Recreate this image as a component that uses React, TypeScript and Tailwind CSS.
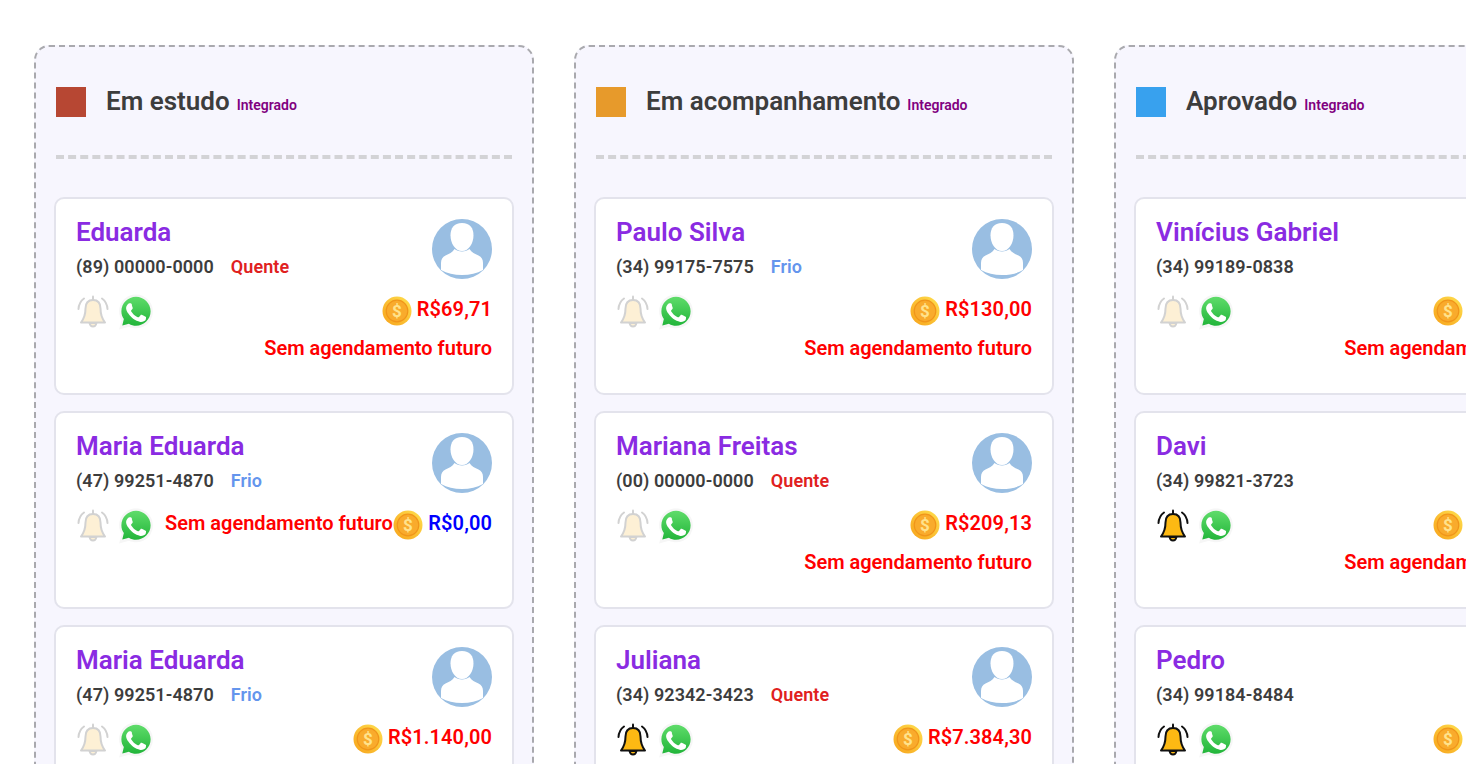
const FONT = "font-['Roboto',sans-serif]";

// ─── Types ────────────────────────────────────────────────────────────────────

interface Lead {
  name: string;
  phone: string;
  temp?: "Quente" | "Frio";
  value: string;
  bellOn?: boolean;
  inlineSchedule?: boolean;
}

interface Column {
  title: string;
  color: string;
  leads: Lead[];
}

const COLUMNS: Column[] = [
  {
    title: "Em estudo",
    color: "bg-[#b74733]",
    leads: [
      { name: "Eduarda", phone: "(89) 00000-0000", temp: "Quente", value: "R$69,71" },
      { name: "Maria Eduarda", phone: "(47) 99251-4870", temp: "Frio", value: "R$0,00", inlineSchedule: true },
      { name: "Maria Eduarda", phone: "(47) 99251-4870", temp: "Frio", value: "R$1.140,00" },
    ],
  },
  {
    title: "Em acompanhamento",
    color: "bg-[#e79a2b]",
    leads: [
      { name: "Paulo Silva", phone: "(34) 99175-7575", temp: "Frio", value: "R$130,00" },
      { name: "Mariana Freitas", phone: "(00) 00000-0000", temp: "Quente", value: "R$209,13" },
      { name: "Juliana", phone: "(34) 92342-3423", temp: "Quente", value: "R$7.384,30", bellOn: true },
    ],
  },
  {
    title: "Aprovado",
    color: "bg-[#38a1ee]",
    leads: [
      { name: "Vinícius Gabriel", phone: "(34) 99189-0838", value: "R$1.200,00" },
      { name: "Davi", phone: "(34) 99821-3723", value: "R$3.500,00", bellOn: true },
      { name: "Pedro", phone: "(34) 99184-8484", value: "R$2.800,00", bellOn: true },
    ],
  },
];

// ─── Icons ────────────────────────────────────────────────────────────────────

function Bell({ on }: { on?: boolean }) {
  const stroke = on ? "#111111" : "#d2d2d2";
  const fill = on ? "#fdb913" : "#fdf0d5";
  return (
    <svg width="34" height="36" viewBox="0 0 34 36" fill="none" className="shrink-0">
      <path d="M8 4.500C4.500 7 2.800 10.500 2.500 15M26 4.500C29.500 7 31.200 10.500 31.500 15" stroke={stroke} strokeWidth="2" strokeLinecap="round" />
      <path d="M17 2.500V6" stroke={stroke} strokeWidth="2" strokeLinecap="round" />
      <path d="M17 6C12 6 9.500 9.500 9.500 14.500C9.500 21 8.500 24 5 28.500H29C25.500 24 24.500 21 24.500 14.500C24.500 9.500 22 6 17 6Z" fill={fill} stroke={stroke} strokeWidth="2" strokeLinejoin="round" />
      <path d="M13.500 29C14 31.500 15.300 32.500 17 32.500C18.700 32.500 20 31.500 20.500 29Z" fill={fill} stroke={stroke} strokeWidth="1.800" strokeLinejoin="round" />
    </svg>
  );
}

function WhatsApp() {
  return (
    <svg width="36" height="36" viewBox="2 2 32 32" className="shrink-0">
      <defs>
        <linearGradient id="wa-green" x1="0" y1="0" x2="0" y2="1">
          <stop offset="0" stopColor="#5fdc6a" />
          <stop offset="1" stopColor="#22b53a" />
        </linearGradient>
      </defs>
      <path d="M18 2.500C9.700 2.500 3 9.100 3 17.300C3 20.100 3.800 22.800 5.200 25L3 33.500L11.800 31.200C13.700 32.100 15.800 32.500 18 32.500C26.300 32.500 33 25.700 33 17.500C33 9.200 26.300 2.500 18 2.500Z" fill="#f6f6f6" />
      <path d="M18 4.500C11 4.500 5 10.200 5 17.300C5 19.900 5.800 22.300 7.200 24.300L5.800 30L11.700 28.500C13.600 29.700 15.800 30.300 18 30.300C25 30.300 31 24.500 31 17.400C31 10.300 25 4.500 18 4.500Z" fill="url(#wa-green)" />
      <path d="M14.300 11.200C13.900 10.300 13.500 10.300 13.100 10.300H12.100C11.700 10.300 11.200 10.500 10.800 11C10.300 11.500 9.200 12.600 9.200 14.700C9.200 16.800 10.800 18.900 11 19.200C11.300 19.500 14.100 24 18.500 25.700C22.200 27.100 22.900 26.800 23.700 26.700C24.500 26.600 26.300 25.700 26.700 24.600C27 23.600 27 22.700 26.900 22.500C26.800 22.300 26.500 22.200 26 22C25.600 21.800 23.400 20.700 23 20.500C22.600 20.400 22.300 20.300 22 20.800C21.700 21.200 20.900 22.200 20.600 22.500C20.400 22.800 20.100 22.800 19.700 22.600C19.200 22.400 17.800 21.900 16.100 20.400C14.800 19.200 13.900 17.800 13.700 17.400C13.400 16.900 13.600 16.700 13.900 16.400C14.100 16.200 14.300 15.900 14.600 15.600C14.800 15.300 14.900 15.100 15 14.800C15.200 14.500 15.100 14.200 15 14C14.900 13.800 14.100 11.800 14.300 11.200Z" fill="#ffffff" />
    </svg>
  );
}

function Coin() {
  return (
    <svg width="30" height="30" viewBox="0 0 30 30" className="shrink-0 translate-y-[2px]">
      <defs>
        <linearGradient id="coin-rim" x1="1" y1="0" x2="0" y2="1">
          <stop offset="0" stopColor="#ffe04f" />
          <stop offset="1" stopColor="#f7a21a" />
        </linearGradient>
      </defs>
      <circle cx="15" cy="15" r="14.500" fill="url(#coin-rim)" />
      <circle cx="15" cy="15" r="10.800" fill="#f9ab2c" stroke="#f0951a" strokeWidth="1.200" />
      <text x="15" y="21" textAnchor="middle" fontSize="17" fontWeight="700" fill="#ffe38c" fontFamily="Roboto, sans-serif">$</text>
    </svg>
  );
}

function Avatar() {
  return (
    <svg width="60" height="60" viewBox="0 0 60 60" className="shrink-0">
      <circle cx="30" cy="30" r="30" fill="#99bee2" />
      <path d="M30 4C22 4 18.500 9 18.500 16.500C18.500 24 23 32 30 32C37 32 41.500 24 41.500 16.500C41.500 9 38 4 30 4Z" fill="#ffffff" />
      <path d="M22.500 30C20.500 33.500 17 35 13.500 36.500C10.500 38 9 40.500 9 44V51C15 54.500 22 56 30 56C38 56 45 54.500 51 51V44C51 40.500 49.500 38 46.500 36.500C43 35 39.500 33.500 37.500 30C35.500 31.500 33 32.500 30 32.500C27 32.500 24.500 31.500 22.500 30Z" fill="#ffffff" />
    </svg>
  );
}

// ─── Card ─────────────────────────────────────────────────────────────────────

function LeadCard({ lead }: { lead: Lead }) {
  const valueColor = lead.value === "R$0,00" ? "text-[#0000ff]" : "text-[#ff0000]";
  const schedule = (
    <span className="text-[20px] leading-[24px] font-semibold text-[#ff0000] whitespace-nowrap">Sem agendamento futuro</span>
  );

  return (
    <div className="w-[460px] h-[198px] shrink-0 -ml-[2px] bg-white border-2 border-[#e3e3ec] rounded-[10px] pt-[20px] pl-[20px] pr-[20px]">
      <div className="flex justify-between">
        <div>
          <div className="-mt-[2px] text-[26px] leading-[30px] font-semibold text-[#8a2be2] whitespace-nowrap">{lead.name}</div>
          <div className="mt-[9px] flex items-center gap-[17px] text-[18px] leading-[22px] font-semibold tracking-[0.07px]">
            <span className="text-[#3d3d3d]">{lead.phone}</span>
            {lead.temp === "Quente" && <span className="text-[#e02020]">Quente</span>}
            {lead.temp === "Frio" && <span className="text-[#6495ed]">Frio</span>}
          </div>
        </div>
        <Avatar />
      </div>

      <div className="mt-[15px] flex items-center justify-between h-[36px]">
        <div className="flex items-center gap-[8px]">
          <Bell on={lead.bellOn} />
          <WhatsApp />
          {lead.inlineSchedule && <span className="ml-[3px] -mt-[5px]">{schedule}</span>}
        </div>
        <div className="-mt-[7px] flex items-center gap-[5px]">
          <Coin />
          <span className={`text-[20px] leading-[24px] font-semibold tracking-[0.1px] ${valueColor}`}>{lead.value}</span>
        </div>
      </div>

      {!lead.inlineSchedule && <div className="mt-[6px] flex justify-end">{schedule}</div>}
    </div>
  );
}

// ─── Board ────────────────────────────────────────────────────────────────────

function BoardColumn({ column }: { column: Column }) {
  return (
    <div className="w-[500px] shrink-0 bg-[#f7f6fe] border-2 border-dashed border-[#a9a9ae] rounded-[15px] pt-[40px] pb-[20px] px-[20px] flex flex-col">
      <div className="flex items-center h-[30px]">
        <div className={`w-[30px] h-[30px] shrink-0 ${column.color}`} />
        <div className="ml-[20px] flex items-baseline -mt-[3px] whitespace-nowrap">
          <span className="text-[26px] leading-[30px] font-semibold text-[#3d3d3d]">{column.title}</span>
          <span className="ml-[7px] text-[14px] leading-[18px] font-semibold text-[#800080]">Integrado</span>
        </div>
      </div>
      <div className="mt-[38px] border-t-[4px] border-dashed border-[#d3d3d6]" />
      <div className="mt-[38px] flex flex-col gap-[16px]">
        {column.leads.map((lead, i) => (
          <LeadCard key={i} lead={lead} />
        ))}
      </div>
    </div>
  );
}

export default function App() {
  return (
    <div className={`${FONT} w-[1466px] h-[764px] overflow-hidden bg-white pt-[45px] pl-[34px] flex items-start gap-[40px]`}>
      {COLUMNS.map((column) => (
        <BoardColumn key={column.title} column={column} />
      ))}
    </div>
  );
}
